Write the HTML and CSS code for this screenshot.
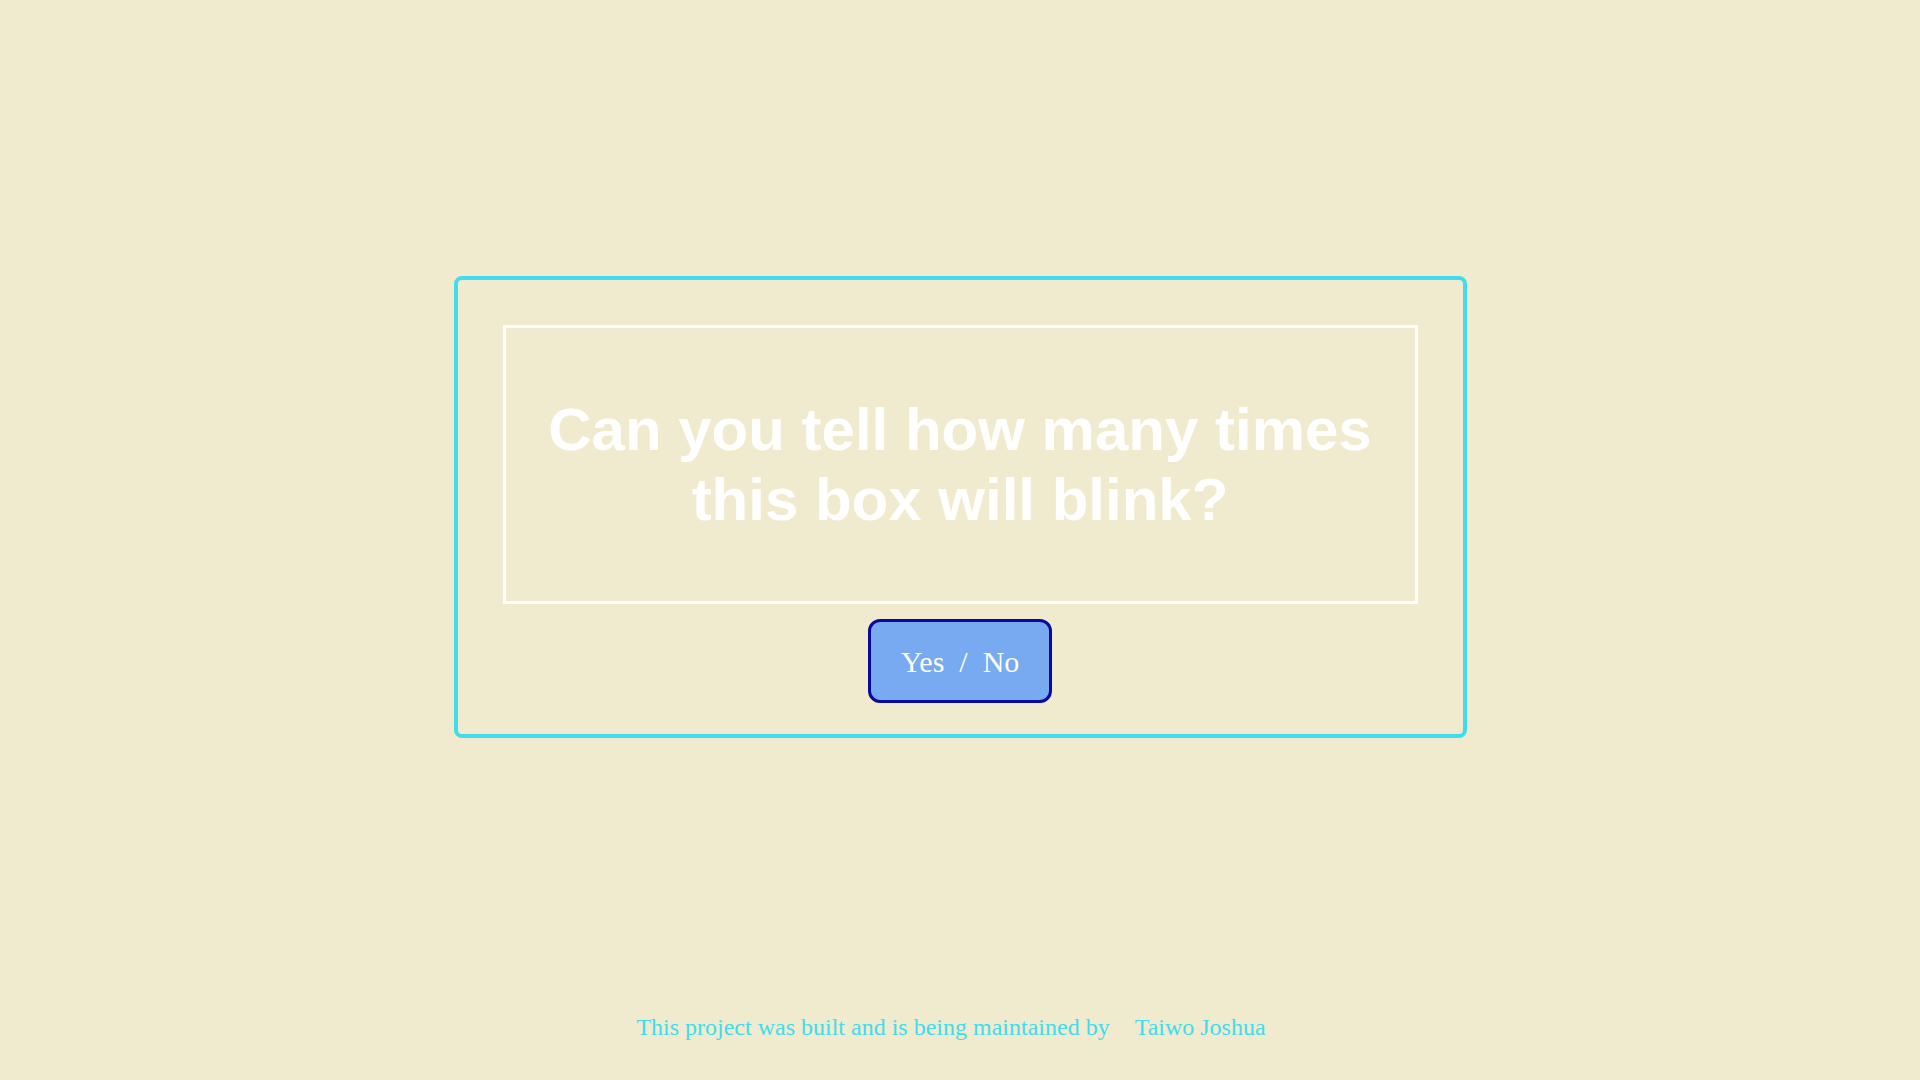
FILE: index.html
```html
<!DOCTYPE html>
<html lang="en">
<head>
<meta charset="utf-8">
<title>Blink</title>
<link rel="stylesheet" href="styles.css">
</head>
<body>
<main class="stage">
  <section class="frame">
    <div class="blink-box">
      <h1 class="question">Can you tell how many times<br>this box will blink?</h1>
    </div>
    <button class="answer" type="button">Yes &nbsp;/&nbsp; No</button>
  </section>
</main>
<footer class="credit">
  <span class="credit-text">This project was built and is being maintained by</span>
  <a class="credit-link" href="#">Taiwo Joshua</a>
</footer>
</body>
</html>
```
FILE: styles.css
```css
* { box-sizing: border-box; }
html, body { margin: 0; padding: 0; }
body {
  background: #f0ebce;
  min-height: 100vh;
  display: flex;
  flex-direction: column;
  font-family: "Liberation Serif", "Times New Roman", serif;
}
.stage {
  flex: 1;
  display: flex;
  justify-content: center;
  padding-top: 276px;
}
.frame {
  width: 1013px;
  height: 462px;
  border: 4px solid #3fdcee;
  border-radius: 8px;
  padding: 45px 45px 0;
  display: flex;
  flex-direction: column;
  align-items: center;
}
.blink-box {
  width: 100%;
  height: 279px;
  border: 3px solid #ffffff;
  display: flex;
  align-items: center;
  justify-content: center;
}
.question {
  margin: 0;
  color: #ffffff;
  font-family: "Liberation Sans", Arial, sans-serif;
  font-weight: bold;
  font-size: 60px;
  line-height: 70px;
  text-align: center;
}
.answer {
  margin-top: 15px;
  width: 184px;
  height: 84px;
  background: #77aaf0;
  border: 3px solid #0a0aa0;
  border-radius: 12px;
  color: #ffffff;
  font-family: "Liberation Serif", "Times New Roman", serif;
  font-size: 30px;
  padding: 2px 0 0;
  cursor: pointer;
}
.credit {
  display: flex;
  justify-content: center;
  gap: 25px;
  padding: 0 18px 39px 0;
  color: #3fdcee;
  font-size: 24px;
}
.credit-link {
  color: #3fdcee;
  text-decoration: none;
}
```
